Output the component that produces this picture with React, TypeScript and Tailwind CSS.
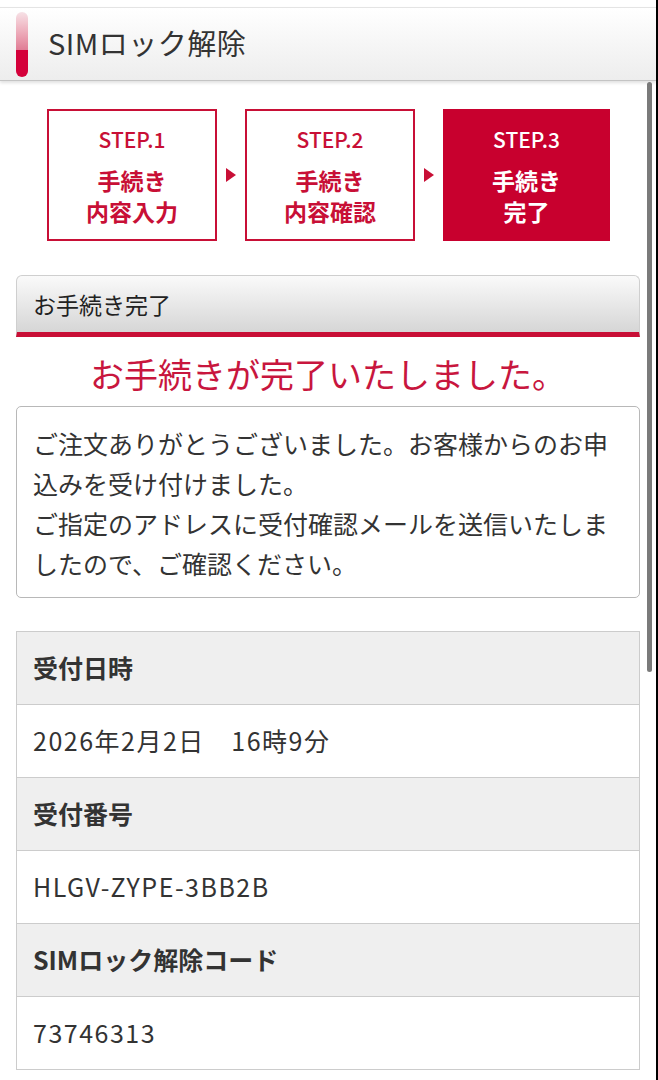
import React from "react";

const RED = "#c80f36";

const rows = [
  { label: "受付日時", value: "2026年2月2日　16時9分" },
  { label: "受付番号", value: "HLGV-ZYPE-3BB2B" },
  { label: "SIMロック解除コード", value: "73746313" },
];

function Arrow() {
  return (
    <div className="flex w-[28px] items-center justify-center">
      <svg width="12" height="14" viewBox="0 0 12 14">
        <polygon points="1,0 11,7 1,14" fill={RED} />
      </svg>
    </div>
  );
}

function Step({ n, lines, active }: { n: number; lines: string[]; active?: boolean }) {
  return (
    <div
      className={
        active
          ? "flex h-[132px] w-[167px] flex-col items-center bg-[#c8002e] pt-[18px] text-white"
          : "flex h-[132px] w-[170px] flex-col items-center border-2 border-[#c80f36] bg-white pt-[16px] text-[#c80f36]"
      }
    >
      <div className="text-[21px] font-medium leading-[24px]">STEP.{n}</div>
      <div className="mt-[14px] text-center text-[23px] font-bold leading-[31px]">
        {lines.map((l) => (
          <div key={l}>{l}</div>
        ))}
      </div>
    </div>
  );
}

export default function App() {
  return (
    <div className="relative h-[1080px] w-[658px] overflow-hidden border-r-2 border-black bg-white font-['Noto_Sans_CJK_JP','Noto_Sans',sans-serif] text-[#333]">
      {/* page title */}
      <div className="mt-[7px] flex h-[74px] items-center border-y border-t-[#e4e4e4] border-b-[#c4c4c4] bg-gradient-to-b from-white to-[#ededed] pl-[16px] shadow-[0_2px_3px_rgba(0,0,0,0.12)]">
        <div className="flex h-[65px] w-[12px] flex-col overflow-hidden rounded-full">
          <div className="h-[38px] bg-gradient-to-b from-[#f6e1e6] to-[#e07c95]" />
          <div className="flex-1 bg-[#d4003a]" />
        </div>
        <div className="mb-[4px] ml-[20px] text-[29px] leading-none tracking-[0.5px]">SIMロック解除</div>
      </div>

      {/* steps */}
      <div className="mt-[28px] flex pl-[47px]">
        <Step n={1} lines={["手続き", "内容入力"]} />
        <Arrow />
        <Step n={2} lines={["手続き", "内容確認"]} />
        <Arrow />
        <Step n={3} lines={["手続き", "完了"]} active />
      </div>

      {/* section header */}
      <div className="ml-[16px] mt-[34px] flex h-[62px] w-[624px] items-center rounded-t-[6px] border border-b-[5px] border-[#cfcfcf] border-b-[#c80f36] bg-gradient-to-b from-[#fafafa] to-[#d6d6d6] pl-[16px] text-[23px] text-[#222]">
        お手続き完了
      </div>

      <div className="mt-[17px] text-center text-[34px] leading-[40px] text-[#c8163e]">
        お手続きが完了いたしました。
      </div>

      {/* message */}
      <div className="ml-[16px] mt-[12px] w-[624px] rounded-[5px] border border-[#b8b8b8] px-[16px] pb-[14px] pt-[16px] text-[25px] leading-[40px]">
        ご注文ありがとうございました。お客様からのお申込みを受け付けました。
        <br />
        ご指定のアドレスに受付確認メールを送信いたしましたので、ご確認ください。
      </div>

      {/* details table */}
      <div className="ml-[16px] mt-[33px] w-[624px] border-x border-t border-[#cccccc]">
        {rows.map((r) => (
          <React.Fragment key={r.label}>
            <div className="flex h-[73px] items-center border-b border-[#cccccc] bg-[#efefef] pl-[16px] text-[25px] font-bold">
              {r.label}
            </div>
            <div className="flex h-[73px] items-center border-b border-[#cccccc] pl-[16px] text-[25px] tracking-[1.5px]">
              {r.value}
            </div>
          </React.Fragment>
        ))}
      </div>

      {/* scrollbar */}
      <div className="absolute right-[4px] top-[82px] h-[590px] w-[5px] rounded-full bg-[#7a7a7a]" />
    </div>
  );
}
